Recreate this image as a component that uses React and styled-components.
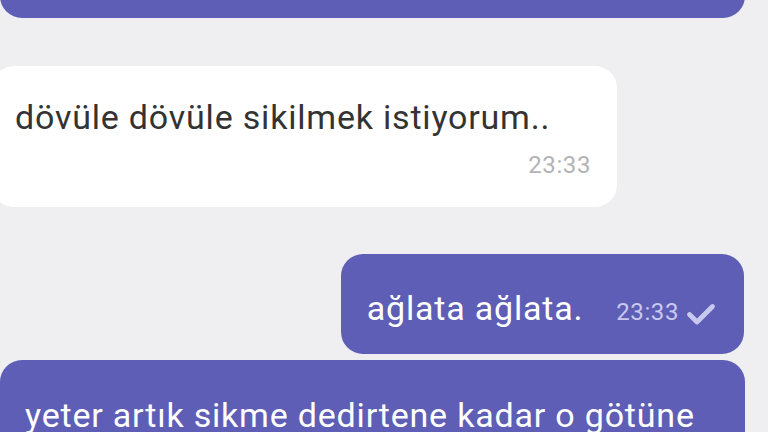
import React from "react";
import styled, { createGlobalStyle } from "styled-components";

const Global = createGlobalStyle`
  html, body { margin: 0; padding: 0; background: #efeff1; }
  body { font-family: Roboto, "Noto Sans", "Liberation Sans", sans-serif; }
`;

const Page = styled.div`
  width: 768px;
  height: 432px;
  overflow: hidden;
  background: #efeff1;
  display: flex;
  flex-direction: column;
  align-items: flex-start;
`;

const Bubble = styled.div`
  box-sizing: border-box;
  flex-shrink: 0;
  border-radius: 22px;
  background: ${(p) => (p.$out ? "#5e5eb6" : "#ffffff")};
  color: ${(p) => (p.$out ? "#ffffff" : "#333333")};
  align-self: ${(p) => (p.$right ? "flex-end" : "flex-start")};
`;

const TopBubble = styled(Bubble)`
  width: 745px;
  height: 60px;
  margin-top: -42px;
`;

const InBubble = styled(Bubble)`
  width: 625px;
  margin-left: -8px;
  margin-top: 48px;
  padding: 31px 26px 27px 23px;
`;

const OutBubble = styled(Bubble)`
  margin-right: 24px;
  margin-top: 47px;
  padding: 34px 28px 26px 26px;
  display: flex;
  align-items: baseline;
`;

const WideBubble = styled(Bubble)`
  width: 745px;
  margin-top: 6px;
  padding: 35px 24px 20px 25px;
`;

const Text = styled.div`
  font-size: 34px;
  line-height: 40px;
  letter-spacing: 0.8px;
  white-space: nowrap;
`;

const Time = styled.span`
  font-size: 24px;
  line-height: 30px;
  letter-spacing: 0.6px;
  color: ${(p) => (p.$out ? "#c9c9f0" : "#b3b3b6")};
`;

const TimeRow = styled.div`
  display: flex;
  justify-content: flex-end;
  margin-top: 13px;
`;

const Meta = styled.div`
  display: flex;
  align-items: center;
  gap: 7px;
  margin-left: 33px;
`;

const Check = () => (
  <svg width="30" height="24" viewBox="0 0 30 24" style={{ transform: "translateY(2px)" }}>
    <path d="M3.5 12.5 L11 20 L26.5 4.5" fill="none" stroke="#c9c9f0" strokeWidth="4.8" strokeLinecap="round" strokeLinejoin="round" />
  </svg>
);

export default function App() {
  return (
    <Page>
      <Global />
      <TopBubble $out />
      <InBubble>
        <Text>dövüle dövüle sikilmek istiyorum..</Text>
        <TimeRow>
          <Time>23:33</Time>
        </TimeRow>
      </InBubble>
      <OutBubble $out $right>
        <Text>ağlata ağlata.</Text>
        <Meta>
          <Time $out>23:33</Time>
          <Check />
        </Meta>
      </OutBubble>
      <WideBubble $out>
        <Text>yeter artık sikme dedirtene kadar o götüne</Text>
      </WideBubble>
    </Page>
  );
}
